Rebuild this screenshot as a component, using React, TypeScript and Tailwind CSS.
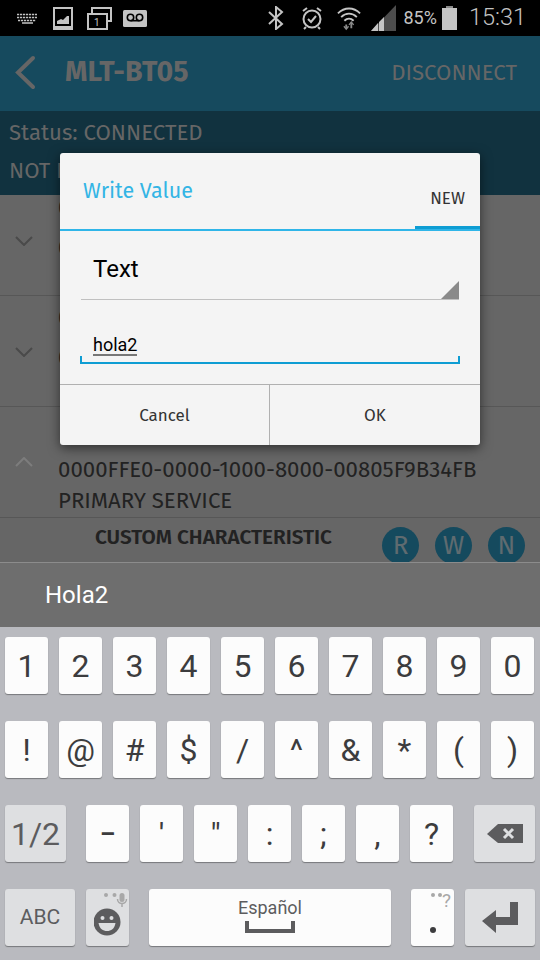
const row1 = ['1', '2', '3', '4', '5', '6', '7', '8', '9', '0'];
const row2 = ['!', '@', '#', '$', '/', '^', '&', '*', '(', ')'];
const row3 = ["'", '"', ':', ';', ',', '?'];

function Key({ label }: { label: string }) {
  return (
    <div className="w-[43px] h-[57px] shrink-0 rounded-[3px] bg-[#fcfcfc] shadow-[0_1px_1px_#77787c] flex items-center justify-center text-[32px] font-[450] text-[#3c3c3e]">
      {label}
    </div>
  );
}

function StatusBar() {
  return (
    <div className="h-[36px] shrink-0 bg-black flex items-center text-[#c4c4c4] pl-[17px] pr-[14px]">
      <svg width="21" height="11" viewBox="0 0 21 11" fill="none" stroke="#c4c4c4" strokeWidth="1.500" strokeDasharray="2.200 0.800">
        <path d="M0 1.500h20M0 4.500h20M1 7.500h18" />
        <path d="M5 10h11" strokeDasharray="none" />
      </svg>
      <svg className="ml-[15px]" width="20" height="23" viewBox="0 0 20 23">
        <rect width="20" height="23" fill="#c4c4c4" />
        <rect x="2" y="2" width="16" height="17" fill="#000" />
        <path d="M4 17v-3l4-2 2 1 4-4 2 0v8z" fill="#c4c4c4" />
      </svg>
      <svg className="ml-[14px]" width="25" height="24" viewBox="0 0 25 24" fill="none" stroke="#c4c4c4" strokeWidth="2">
        <rect x="1" y="8" width="19" height="15" />
        <path d="M5 7V2h19v13h-3" />
        <text x="7" y="20" fontSize="10" fill="#c4c4c4" stroke="none" fontFamily="Roboto, sans-serif">1</text>
      </svg>
      <svg className="ml-[11px]" width="24" height="17" viewBox="0 0 24 17">
        <rect width="24" height="17" rx="1.500" fill="#c4c4c4" />
        <circle cx="7.500" cy="7.500" r="3.200" fill="none" stroke="#000" strokeWidth="1.600" />
        <circle cx="16.500" cy="7.500" r="3.200" fill="none" stroke="#000" strokeWidth="1.600" />
        <rect x="7.500" y="9.900" width="9" height="1.600" fill="#000" />
      </svg>
      <div className="flex-1" />
      <svg width="16" height="24" viewBox="0 0 16 24" fill="none" stroke="#c4c4c4" strokeWidth="2">
        <path d="M1 6l13 12-6 5V1l6 5L1 18" />
      </svg>
      <svg className="ml-[17px]" width="22" height="24" viewBox="0 0 22 24" fill="none" stroke="#c4c4c4" strokeWidth="2">
        <circle cx="11" cy="13" r="8.500" />
        <path d="M7 13l3 3 5-6" />
        <path d="M2 5l4-3M20 5l-4-3M5 21l-2 2M17 21l2 2" />
      </svg>
      <svg className="ml-[14px]" width="24" height="26" viewBox="0 0 26 26" fill="none" stroke="#c4c4c4" strokeWidth="2">
        <path d="M1 8c7-7 17-7 24 0" />
        <path d="M4.500 12c5-5 12-5 17 0" />
        <path d="M8 16c3-3 7-3 10 0" />
        <path d="M10 20v5M15.500 18v6" stroke="#8a8a8a" />
        <path d="M7.500 22l2.500 3 2.500-3M13 20.500l2.500-3 2.500 3" stroke="#8a8a8a" strokeWidth="1.500" />
      </svg>
      <svg className="ml-[10px]" width="25" height="26" viewBox="0 0 25 26">
        <path d="M25 0v26H0z" fill="#4d4d4d" />
        <path d="M7 18v8H0zM13 12v14H8V17z" fill="#c4c4c4" />
      </svg>
      <span className="ml-[8px] text-[18px] font-['Roboto',sans-serif] leading-none">85%</span>
      <svg className="ml-[5px]" width="15" height="24" viewBox="0 0 15 24" fill="#c4c4c4">
        <rect x="4" y="0" width="7" height="2" fill="#8a8a8a" />
        <rect x="0" y="2" width="15" height="22" />
      </svg>
      <span className="ml-[12px] text-[23.500px] font-light font-['Roboto',sans-serif] leading-none">15:31</span>
    </div>
  );
}

function Chevron({ up }: { up?: boolean }) {
  return (
    <svg width="18" height="10" viewBox="0 0 18 10" fill="none" stroke={up ? '#7d7d7d' : '#4a4a4a'} strokeWidth="2" className="shrink-0">
      <path d={up ? 'M1 9l8-8 8 8' : 'M1 1l8 8 8-8'} />
    </svg>
  );
}

function ServiceRow({ rowClass, chevronClass, textClass }: { rowClass: string; chevronClass: string; textClass: string }) {
  return (
    <div className={`shrink-0 border-b border-[#575757] flex pl-[15px] ${rowClass}`}>
      <div className={chevronClass}>
        <Chevron />
      </div>
      <div className={`ml-[25px] text-[22px] leading-[26px] text-[#222] flex flex-col gap-[14px] ${textClass}`}>
        <div>0</div>
        <div>0</div>
      </div>
    </div>
  );
}

function Circle({ label }: { label: string }) {
  return (
    <div className="w-[37px] h-[37px] rounded-full bg-[#154a5e] flex items-center justify-center text-[26px] text-[#5f6b70]">
      {label}
    </div>
  );
}

function Dialog() {
  return (
    <div className="absolute left-[60px] top-[153px] w-[420px] h-[292px] rounded-[3px] bg-[#f4f4f4] shadow-[0_3px_12px_rgba(0,0,0,0.55)] flex flex-col">
      <div className="h-[78px] relative border-b-[2px] border-[#2fb5e8] shrink-0">
        <div className="pl-[23px] pt-[23px] text-[21.500px] leading-[30px] text-[#33b5e5]">Write Value</div>
        <div className="absolute right-[15px] top-[36px] text-[17px] leading-[20px] text-[#333]">NEW</div>
        <div className="absolute right-0 bottom-0 w-[65px] h-[3px] bg-[#0e9dd3]" />
      </div>
      <div className="flex-1 px-[20px] font-['Roboto',sans-serif]">
        <div className="relative mx-[1px] h-[69px] border-b border-[#c0c0c0]">
          <div className="pl-[12px] pt-[21px] text-[24px] leading-[34px] text-black">Text</div>
          <svg className="absolute right-0 bottom-0" width="18" height="18" viewBox="0 0 18 18">
            <path d="M18 0v18H0z" fill="#8a8a8a" />
          </svg>
        </div>
        <div className="relative h-[64px] border-b-[2px] border-[#0e9dd3]">
          <div className="absolute left-[13px] top-[33px] text-[18px] leading-[24px] text-black border-b-[2px] border-[#777] h-[23px]">hola2</div>
          <div className="absolute left-0 bottom-0 w-[2px] h-[6px] bg-[#0e9dd3]" />
          <div className="absolute right-0 bottom-0 w-[2px] h-[6px] bg-[#0e9dd3]" />
        </div>
      </div>
      <div className="h-[61px] shrink-0 border-t border-[#b0b0b0] flex text-[17px] text-[#333] pt-[1px]">
        <div className="w-[210px] border-r border-[#b0b0b0] -mt-[1px] pt-[1px] flex items-center justify-center">Cancel</div>
        <div className="flex-1 flex items-center justify-center">OK</div>
      </div>
    </div>
  );
}

export default function App() {
  return (
    <div className="relative w-[540px] h-[960px] overflow-hidden bg-[#666] flex flex-col font-['Fira_Sans','Open_Sans',sans-serif]">
      <StatusBar />
      <div className="h-[75px] shrink-0 bg-[#164a5e] flex items-center text-[#666] pb-[2px]">
        <svg className="ml-[15px]" width="21" height="35" viewBox="0 0 21 35" fill="none" stroke="#666" strokeWidth="4" strokeLinecap="round">
          <path d="M18 3L3 17.500 18 32" />
        </svg>
        <div className="ml-[29px] text-[28.500px] font-bold">MLT-BT05</div>
        <div className="flex-1" />
        <div className="mr-[23px] text-[22.200px]">DISCONNECT</div>
      </div>
      <div className="h-[84px] shrink-0 bg-[#11323f] pl-[9px] pt-[3px] text-[22.200px] leading-[38px] text-[#666]">
        <div>Status: CONNECTED</div>
        <div>NOT BONDED</div>
      </div>
      <ServiceRow rowClass="h-[101px]" chevronClass="pt-[41px]" textClass="" />
      <ServiceRow rowClass="h-[111px]" chevronClass="pt-[51px]" textClass="pt-[9px]" />
      <div className="h-[111px] shrink-0 border-b border-[#575757] pl-[15px] flex">
        <div className="pt-[50px]">
          <Chevron up />
        </div>
        <div className="ml-[25px] pt-[47px] text-[22.200px] leading-[31px] text-[#222] whitespace-nowrap">
          <div>0000FFE0-0000-1000-8000-00805F9B34FB</div>
          <div>PRIMARY SERVICE</div>
        </div>
      </div>
      <div className="h-[44px] shrink-0 relative overflow-hidden flex pl-[95px] pt-[6px]">
        <div className="text-[20.700px] leading-[26px] font-semibold text-[#222]">CUSTOM CHARACTERISTIC</div>
        <div className="absolute left-[382px] top-[9px] flex gap-[16px]">
          <Circle label="R" />
          <Circle label="W" />
          <Circle label="N" />
        </div>
      </div>
      <div className="h-[65px] shrink-0 bg-[#6e6e6e] border-t border-[#8c8c8c] pl-[45px] flex items-center text-[24px] text-white font-['Roboto',sans-serif]">
        Hola2
      </div>
      <div className="flex-1 bg-[#b9babf] pt-[10px] px-[5px] flex flex-col gap-[27px] font-['Roboto',sans-serif]">
        <div className="flex gap-[11px]">
          {row1.map((k) => <Key key={k} label={k} />)}
        </div>
        <div className="flex gap-[11px]">
          {row2.map((k) => <Key key={k} label={k} />)}
        </div>
        <div className="flex">
          <div className="w-[61px] h-[57px] rounded-[3px] bg-[#dedfe1] shadow-[0_1px_1px_#77787c] flex items-center justify-center text-[32px] text-[#5c5c5e]">1/2</div>
          <div className="ml-[20px] flex gap-[11px]">
            <div className="w-[43px] h-[57px] shrink-0 rounded-[3px] bg-[#fcfcfc] shadow-[0_1px_1px_#77787c] flex items-center justify-center text-[24px] font-bold text-[#3c3c3e]">–</div>
            {row3.map((k) => <Key key={k} label={k} />)}
          </div>
          <div className="ml-[21px] w-[61px] h-[57px] rounded-[3px] bg-[#dedfe1] shadow-[0_1px_1px_#77787c] flex items-center justify-center">
            <svg width="36" height="20" viewBox="0 0 36 20">
              <path d="M0 10L11 0h25v19H11z" fill="#5c5c5e" />
              <path d="M17 5l9 9M26 5l-9 9" stroke="#dedfe1" strokeWidth="3" />
            </svg>
          </div>
        </div>
        <div className="flex">
          <div className="w-[70px] h-[57px] rounded-[3px] bg-[#dedfe1] shadow-[0_1px_1px_#77787c] flex items-center justify-center text-[21px] text-[#5c5c5e]">ABC</div>
          <div className="relative ml-[11px] w-[43px] h-[57px] rounded-[3px] bg-[#dedfe1] shadow-[0_1px_1px_#77787c]">
            <svg className="absolute left-[8px] top-[3px]" width="34" height="48" viewBox="0 0 34 48">
              <circle cx="13" cy="30" r="13.500" fill="#5c5c5e" />
              <circle cx="8.500" cy="26" r="2" fill="#dedfe1" />
              <circle cx="17.500" cy="26" r="2" fill="#dedfe1" />
              <path d="M4.500 31h17c-1 6-4.500 8-8.500 8s-7.500-2-8.500-8z" fill="#dedfe1" />
              <circle cx="12" cy="3" r="2" fill="#a8a8a8" />
              <circle cx="20.500" cy="3" r="2" fill="#a8a8a8" />
              <rect x="25.500" y="1" width="5" height="9" rx="2.500" fill="#a8a8a8" />
              <path d="M23.500 7c0 6 9 6 9 0M28 11.500v3.500" fill="none" stroke="#a8a8a8" strokeWidth="1.500" />
            </svg>
          </div>
          <div className="ml-[20px] w-[242px] h-[57px] rounded-[3px] bg-[#fcfcfc] shadow-[0_1px_1px_#77787c] flex flex-col items-center pt-[9px]">
            <div className="text-[18px] leading-[20px] text-[#5c5c5e]">Español</div>
            <div className="mt-[3px] w-[50px] h-[12px] border-[4px] border-t-0 border-[#5c5c5e]" />
          </div>
          <div className="relative ml-[20px] w-[43px] h-[57px] rounded-[3px] bg-[#fcfcfc] shadow-[0_1px_1px_#77787c]">
            <div className="absolute left-[20px] top-[4px] w-[4px] h-[4px] rounded-full bg-[#a8a8a8]" />
            <div className="absolute left-[27px] top-[4px] w-[4px] h-[4px] rounded-full bg-[#a8a8a8]" />
            <span className="absolute right-[3px] top-[1px] text-[19px] leading-[22px] text-[#a8a8a8]">?</span>
            <div className="absolute left-[19px] top-[38px] w-[6px] h-[6px] rounded-full bg-[#3c3c3e]" />
          </div>
          <div className="ml-[11px] w-[70px] h-[57px] rounded-[3px] bg-[#dedfe1] shadow-[0_1px_1px_#77787c] flex items-center justify-center">
            <svg width="36" height="31" viewBox="0 0 36 31">
              <path d="M28 0h8v23H14v8L0 19 14 8v7h14z" fill="#5c5c5e" />
            </svg>
          </div>
        </div>
      </div>
      <Dialog />
    </div>
  );
}
